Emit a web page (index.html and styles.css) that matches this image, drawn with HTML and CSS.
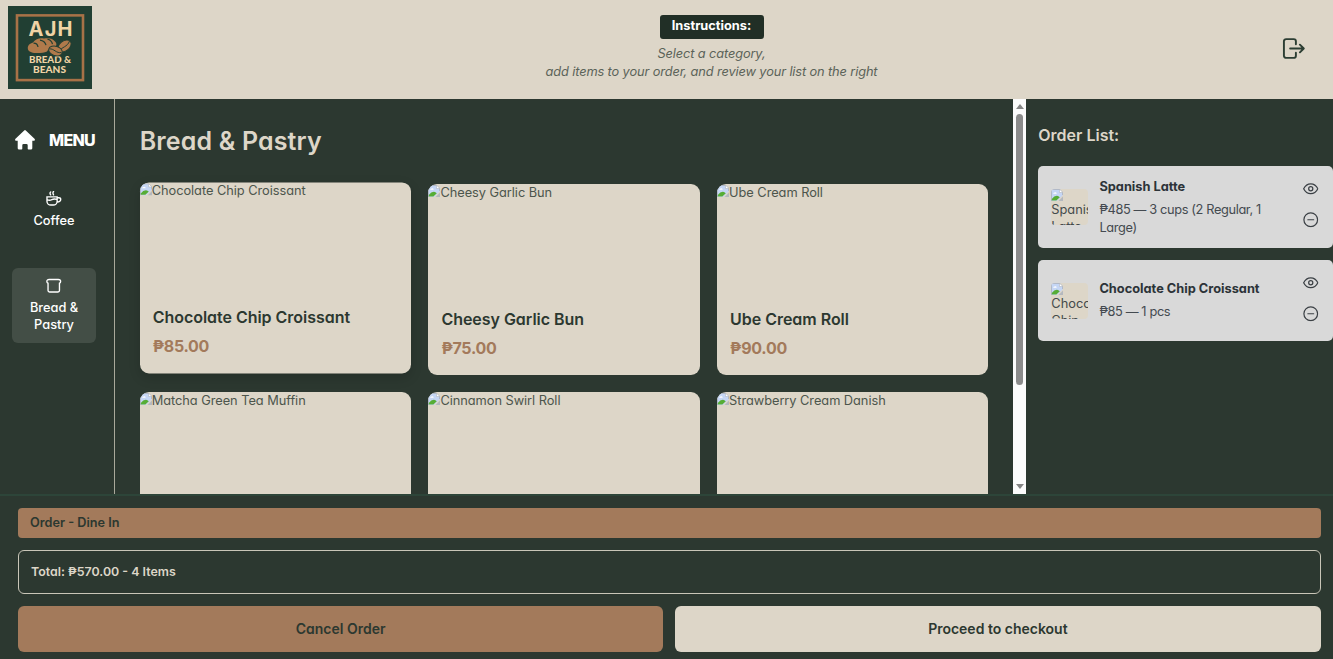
FILE: index.html
```html
<!DOCTYPE html>
<html lang="en">
<head>
<meta charset="utf-8">
<title>AJH Bread &amp; Beans</title>
<link rel="stylesheet" href="styles.css">
</head>
<body>
<svg class="defs" width="0" height="0" aria-hidden="true">
  <symbol id="missing" viewBox="0 0 12 12">
    <path d="M0 0h8.500L12 3.500V6L6 12H0z" fill="#c5d6f5"/>
    <path d="M.4 12V.4h8.100L11.600 3.500V6" fill="none" stroke="#a9adb5" stroke-width=".8"/>
    <path d="M8.500.2v3.300H12z" fill="#fff" stroke="#a9adb5" stroke-width=".5"/>
    <path d="M2.200 4.800q.3-1.500 1.700-1.200 1.300-.9 1.800 1.200z" fill="#fff"/>
    <path d="M.8 11.400V10q3-4 6.200-3l1.800 1.200-3.400 3.200z" fill="#56ad35"/>
    <path d="M7.600 12l4.400-4.400V12z" fill="#b4b8be"/>
  </symbol>
  <symbol id="eye" viewBox="0 0 24 24">
    <path d="M1 12C3.500 7 7.500 4.400 12 4.400S20.500 7 23 12C20.500 17 16.500 19.600 12 19.600S3.500 17 1 12z"/><circle cx="12" cy="12" r="3.200"/>
  </symbol>
  <symbol id="minus" viewBox="0 0 24 24"><circle cx="12" cy="12" r="10.600"/><path d="M7.500 12h9"/></symbol>
</svg>

<header class="header">
  <svg class="logo" viewBox="0 0 84 84" preserveAspectRatio="none">
    <rect width="84" height="84" fill="#213f33"/>
    <rect x="9" y="9.500" width="66" height="65.500" fill="none" stroke="#a87247" stroke-width="2.600"/>
    <g class="logo-text" text-anchor="middle">
      <text class="logo-name" x="42.500" y="30" font-size="20" textLength="44" lengthAdjust="spacing">AJH</text>
      <text x="42" y="58" font-size="9.800" textLength="42" lengthAdjust="spacingAndGlyphs">BREAD &amp;</text>
      <text x="41.500" y="67.500" font-size="9.800" textLength="33" lengthAdjust="spacingAndGlyphs">BEANS</text>
    </g>
    <path d="M20 44c-1-4 2-6 5-7 3-4 7-5 11-4 5-1 9 0 11 3 2 2 2 5-1 6-4 0-6 2-7 4-5 2-17 3-19-2z" fill="#b07a4b"/>
    <path d="M25.500 37.500q4 0 4.500 4M32 34.500q5 1 6 5M39.500 33.500q4 1 5 5" fill="none" stroke="#213f33" stroke-width="1.200"/>
    <g fill="#b07a4b" stroke="#213f33" stroke-width="1">
      <ellipse cx="56.500" cy="40.500" rx="7.500" ry="5" transform="rotate(-38 56.500 40.500)"/>
      <path d="M51.500 45.500c2-4 8-4 10-10" fill="none"/>
      <ellipse cx="47.500" cy="45.500" rx="7" ry="4.800" transform="rotate(18 47.500 45.500)"/>
      <path d="M41.500 43.500c4-1 7 5 12 3.500" fill="none"/>
    </g>
  </svg>
  <div class="instructions">
    <span class="badge">Instructions:</span>
    <p class="hint">Select a category,<br><span>add items to your order, and review your list on the right</span></p>
  </div>
  <svg class="logout" viewBox="0 0 24 24"><path d="M14.500 7.500V4.500a2.300 2.300 0 0 0-2.300-2.300H4.300A2.300 2.300 0 0 0 2 4.500v15a2.300 2.300 0 0 0 2.300 2.300h7.900a2.300 2.300 0 0 0 2.300-2.300v-3M8.500 12h13.500M18.700 8l4 4-4 4"/></svg>
</header>

<main class="main">
  <nav class="sidebar">
    <div class="menu">
      <svg class="home" viewBox="0 0 20 20"><path d="M9.200.4a1.200 1.200 0 0 1 1.600 0l8.700 8.300c.8.800.4 2-.8 2h-1.400v7.500q0 1.400-1.400 1.400h-2.400q-.8 0-.8-.8v-3.500q0-1.300-1.300-1.300H8.600q-1.300 0-1.300 1.300v3.500q0 .8-.8.800H4.100q-1.400 0-1.400-1.400v-7.500H1.300c-1.200 0-1.600-1.200-.8-2z"/></svg>
      <span class="menu-title">MENU</span>
    </div>
    <a class="nav-item">
      <svg class="nav-icon" viewBox="0 0 16 16"><path d="M1 6h10.500v4.500a4 4 0 0 1-4 4H5a4 4 0 0 1-4-4zM11.500 7h1.700q2 0 2 1.800 0 2.500-3.900 2.700M1 9q2.700 1.200 5 0t5.300-.3M4.800 1q-1.300 1 0 3M7.800.600q-1.300 1.200 0 3.400"/></svg>
      <span>Coffee</span>
    </a>
    <a class="nav-item active">
      <svg class="nav-icon" viewBox="0 0 16 16"><path d="M3.300 1.500h9.400q2.400 0 2.400 2 0 1.300-1.200 1.800v7.600q0 1.500-1.500 1.500H3.600q-1.500 0-1.500-1.500V5.300Q.9 4.800.9 3.500q0-2 2.400-2z"/></svg>
      <span>Bread &amp;<br>Pastry</span>
    </a>
  </nav>

  <section class="products">
    <h1 class="title">Bread &amp; Pastry</h1>
    <div class="grid">
      <article class="card raised"><div class="photo"><svg class="missing"><use href="#missing"/></svg><span>Chocolate Chip Croissant</span></div><h2 class="name">Chocolate Chip Croissant</h2><p class="price">₱85.00</p></article>
      <article class="card"><div class="photo"><svg class="missing"><use href="#missing"/></svg><span>Cheesy Garlic Bun</span></div><h2 class="name">Cheesy Garlic Bun</h2><p class="price">₱75.00</p></article>
      <article class="card"><div class="photo"><svg class="missing"><use href="#missing"/></svg><span>Ube Cream Roll</span></div><h2 class="name">Ube Cream Roll</h2><p class="price">₱90.00</p></article>
      <article class="card"><div class="photo"><svg class="missing"><use href="#missing"/></svg><span>Matcha Green Tea Muffin</span></div></article>
      <article class="card"><div class="photo"><svg class="missing"><use href="#missing"/></svg><span>Cinnamon Swirl Roll</span></div></article>
      <article class="card"><div class="photo"><svg class="missing"><use href="#missing"/></svg><span>Strawberry Cream Danish</span></div></article>
    </div>
  </section>

  <div class="scrollbar">
    <svg class="arrow" viewBox="0 0 8 5"><path d="M4 0l4 5H0z"/></svg>
    <div class="thumb"></div>
    <svg class="arrow" viewBox="0 0 8 5"><path d="M0 0h8L4 5z"/></svg>
  </div>

  <aside class="orders">
    <h2 class="orders-title">Order List:</h2>
    <div class="order">
      <div class="thumbnail"><svg class="missing"><use href="#missing"/></svg><span class="alt">Spanish<br>Latte</span></div>
      <div class="details"><strong class="item">Spanish Latte</strong><p class="qty">₱485 — 3 cups (2 Regular, 1<br>Large)</p></div>
      <div class="actions"><svg class="action"><use href="#eye"/></svg><svg class="action"><use href="#minus"/></svg></div>
    </div>
    <div class="order second">
      <div class="thumbnail"><svg class="missing"><use href="#missing"/></svg><span class="alt">Chocolate<br>Chip</span></div>
      <div class="details"><strong class="item">Chocolate Chip Croissant</strong><p class="qty">₱85 — 1 pcs</p></div>
      <div class="actions"><svg class="action"><use href="#eye"/></svg><svg class="action"><use href="#minus"/></svg></div>
    </div>
  </aside>
</main>

<footer class="footer">
  <div class="type">Order - Dine In</div>
  <div class="total">Total: ₱570.00 - 4 Items</div>
  <div class="buttons">
    <button class="btn cancel">Cancel Order</button>
    <button class="btn checkout">Proceed to checkout</button>
  </div>
</footer>
</body>
</html>
```
FILE: styles.css
```css
* { box-sizing: border-box; margin: 0; padding: 0; }
body {
  width: 1333px; height: 659px; overflow: hidden;
  display: flex; flex-direction: column;
  background: #2c3830; color: #2c3830;
  font-family: Inter, "Open Sans", sans-serif;
  font-feature-settings: "cv11";
  font-size: 13px;
}
.defs { position: absolute; }
span { white-space: nowrap; }

.header {
  height: 99px; flex: none; background: #ddd6c8;
  display: flex; justify-content: space-between; align-items: flex-start;
  padding: 6px 28px 0 8px;
}
.logo { width: 84px; height: 83px; flex: none; }
.logo-text { font-family: Lato, sans-serif; font-weight: 900; fill: #f0d3a5; }
.logo-name { font-family: Inter, sans-serif; font-weight: 700; }
.instructions { padding: 9px 0 0 49px; display: flex; flex-direction: column; align-items: center; }
.badge {
  width: 104px; height: 23.500px; border-radius: 3px; background: #212f26; color: #fff;
  font-weight: 700; font-size: 12.800px; line-height: 22px; text-align: center;
}
.hint { margin-top: 6.500px; font-style: italic; font-size: 12.800px; line-height: 17.800px; letter-spacing: -.12px; text-align: center; color: #5b6359; }
.logout { width: 23px; height: 23px; margin-top: 31px; fill: none; stroke: #2c3e33; stroke-width: 2; stroke-linecap: round; stroke-linejoin: round; }

.main { height: 395px; flex: none; display: flex; overflow: hidden; }
.sidebar { width: 115px; flex: none; border-right: 1px solid #a9a99b; padding: 31px 18px 0 12px; color: #fff; }
.menu { display: flex; align-items: center; gap: 14px; height: 20px; padding-left: 3px; }
.home { width: 20px; height: 20px; fill: #fff; flex: none; }
.menu-title { font-size: 16px; font-weight: 800; line-height: 20px; letter-spacing: -.7px; }
.nav-item {
  width: 84px; height: 75px; margin-top: 31px; padding-top: 10px; border-radius: 6px;
  display: flex; flex-direction: column; align-items: center; gap: 5px;
  font-size: 12.800px; font-weight: 500; line-height: 17.600px; text-align: center;
}
.nav-item.active { margin-top: 12px; background: #434e46; }
.nav-icon { width: 15.500px; height: 15.500px; flex: none; fill: none; stroke: #fff; stroke-width: 1.400; stroke-linecap: round; }

.products { width: 898px; flex: none; padding: 25px 24.500px 0 24.700px; }
.title { font-size: 25px; line-height: 35px; font-weight: 600; color: #ddd6c8; letter-spacing: .15px; white-space: nowrap; }
.grid { margin-top: 25px; display: grid; grid-template-columns: repeat(3, 271.200px); grid-auto-rows: 190.800px; gap: 17px 17.500px; }
.card { border-radius: 9px; background: #ddd6c8; overflow: hidden; }
.card.raised { transform: translateY(-1.600px); box-shadow: 0 4px 12px rgba(0, 0, 0, .15); }
.photo { height: 120px; display: flex; align-items: flex-start; color: #4c554c; line-height: 17px; font-size: 12.800px; letter-spacing: -.04px; }
.missing { width: 12px; height: 12px; flex: none; margin-top: 1px; }
.name { padding-left: 13px; font-size: 16px; font-weight: 600; line-height: 30px; white-space: nowrap; letter-spacing: -.03px; }
.price { padding-left: 13px; font-size: 16px; font-weight: 700; line-height: 28px; color: #a37a5b; letter-spacing: -.3px; }

.scrollbar { width: 13.300px; flex: none; background: #fcfcfc; display: flex; flex-direction: column; align-items: center; padding: 5px 0; }
.arrow { width: 8px; height: 5px; fill: #858585; flex: none; }
.thumb { width: 7.500px; height: 271px; margin: 5px 0 auto; border-radius: 4px; background: #8b8b8b; flex: none; }

.orders { flex: 1; padding: 24px 0 0 12px; color: #2c3338; }
.orders-title { font-size: 16px; line-height: 24px; font-weight: 600; color: #ddd6c8; }
.order { height: 82px; margin-top: 19px; border-radius: 5px; background: #d9d9d9; display: flex; align-items: center; padding: 0 15px 0 13px; }
.order.second { margin-top: 12px; height: 81px; }
.thumbnail { width: 36.500px; height: 36px; flex: none; overflow: hidden; border-radius: 4px; background: #ddd6c8; display: flex; flex-direction: column; }
.thumbnail .missing { margin-top: 0; }
.alt { line-height: 17px; color: #444a4b; font-size: 12.800px; }
.details { flex: 1; padding-left: 11.600px; }
.item { display: block; font-size: 12.800px; line-height: 18px; font-weight: 700; white-space: nowrap; }
.qty { margin-top: 5px; font-size: 12.800px; line-height: 17.600px; letter-spacing: -.37px; color: #444a50; white-space: nowrap; }
.actions { display: flex; flex-direction: column; gap: 15.500px; padding-bottom: 5px; }
.action { width: 15.500px; height: 15.500px; fill: none; stroke: #3b4045; stroke-width: 1.900; stroke-linecap: round; overflow: visible; }

.footer { flex: 1; border-top: 2px solid #2d4539; padding: 12px 12.500px 0 18px; }
.type { height: 29.500px; border-radius: 4px; background: #a37a5b; padding-left: 12px; line-height: 29px; font-weight: 600; font-size: 12.700px; }
.total { height: 44px; margin-top: 12.500px; border: 1px solid #c9c6b8; border-radius: 6px; padding-left: 12px; line-height: 41px; font-weight: 600; font-size: 12.400px; color: #ddd6c8; }
.buttons { display: flex; gap: 12px; margin-top: 12px; }
.btn { flex: 1; height: 46px; padding-bottom: 2px; border: 0; border-radius: 6px; font: inherit; font-feature-settings: "cv11"; font-size: 14px; font-weight: 600; color: #2c3830; }
.cancel { background: #a37a5b; }
.checkout { background: #ddd6c8; }
```
